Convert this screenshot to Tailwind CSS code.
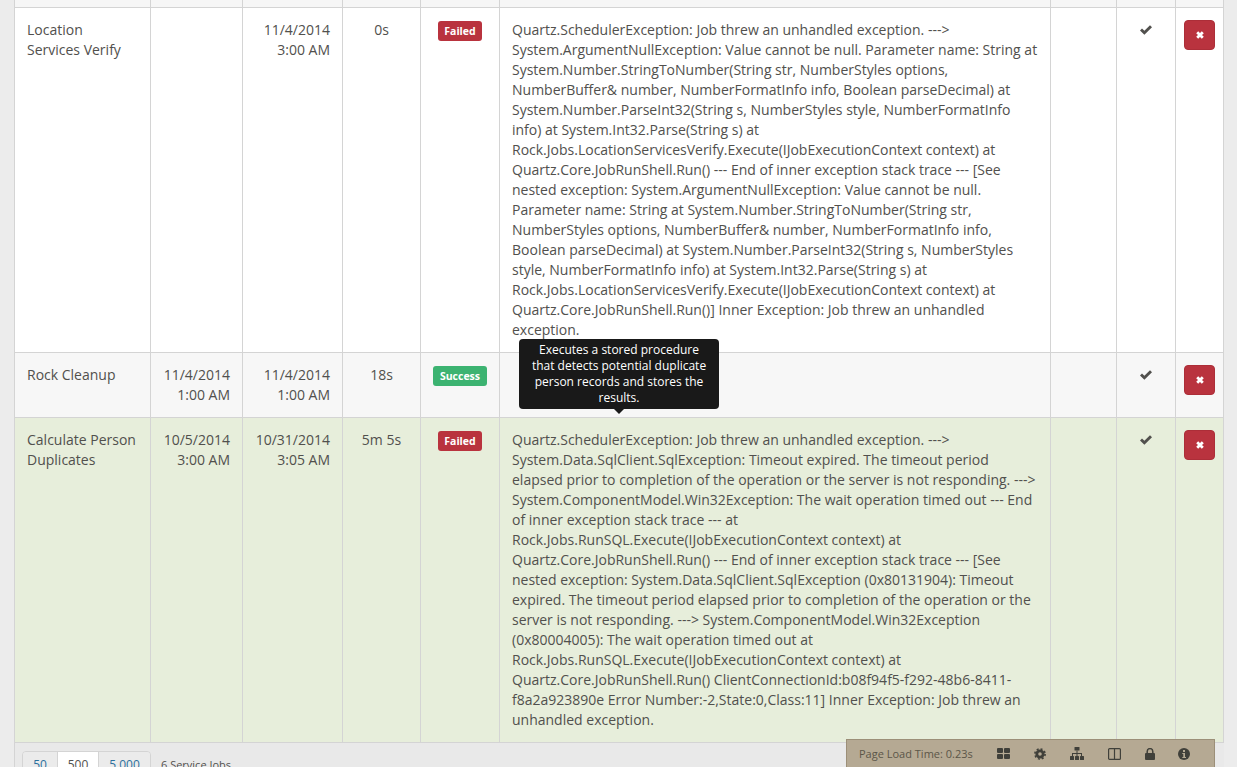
<!DOCTYPE html>
<html lang="en">

<head>
    <meta charset="UTF-8" />
    <title>Service Jobs</title>
    <script src="https://cdn.jsdelivr.net/npm/@tailwindcss/browser@4"></script>
</head>

<body class="bg-[#ececec] h-[767px] overflow-hidden relative font-['Open_Sans',sans-serif] text-[14px] leading-[20px] text-[#51504d]">
    <div class="pl-[14px] pr-[13px]">
        <table class="table-fixed border-collapse w-[1210px] bg-white">
            <colgroup>
                <col class="w-[136px]" />
                <col class="w-[92px]" />
                <col class="w-[100px]" />
                <col class="w-[78px]" />
                <col class="w-[79px]" />
                <col class="w-[551px]" />
                <col class="w-[66px]" />
                <col class="w-[59px]" />
                <col class="w-[48px]" />
            </colgroup>
            <tbody>
                <!-- row cut off by the top of the window -->
                <tr class="h-[7px] bg-[#f6f6f6]">
                    <td class="border-x border-b border-[#d4d4d4] p-0"></td>
                    <td class="border-x border-b border-[#d4d4d4] p-0"></td>
                    <td class="border-x border-b border-[#d4d4d4] p-0"></td>
                    <td class="border-x border-b border-[#d4d4d4] p-0"></td>
                    <td class="border-x border-b border-[#d4d4d4] p-0"></td>
                    <td class="border-x border-b border-[#d4d4d4] p-0"></td>
                    <td class="border-x border-b border-[#d4d4d4] p-0"></td>
                    <td class="border-x border-b border-[#d4d4d4] p-0"></td>
                    <td class="border-x border-b border-[#d4d4d4] p-0"></td>
                </tr>

                <tr class="align-top">
                    <td class="border border-[#d4d4d4] pt-[12px] pb-[12px] px-[12px]">Location Services Verify</td>
                    <td class="border border-[#d4d4d4] px-[12px] pt-[12px] text-right"></td>
                    <td class="border border-[#d4d4d4] px-[12px] pt-[12px] text-right">11/4/2014<br />3:00 AM</td>
                    <td class="border border-[#d4d4d4] px-[12px] pt-[12px] text-center">0s</td>
                    <td class="border border-[#d4d4d4] pt-[13px] text-center">
                        <span class="inline-block bg-[#b9333e] text-white text-[10.5px] leading-[20px] h-[20px] px-[6.5px] rounded-[3px] font-bold align-top">Failed</span>
                    </td>
                    <td class="border border-[#d4d4d4] px-[12px] pt-[12px] pb-[12px] whitespace-nowrap">
                        Quartz.SchedulerException: Job threw an unhandled exception. ---&gt;<br />
                        System.ArgumentNullException: Value cannot be null. Parameter name: String at<br />
                        System.Number.StringToNumber(String str, NumberStyles options,<br />
                        NumberBuffer&amp; number, NumberFormatInfo info, Boolean parseDecimal) at<br />
                        System.Number.ParseInt32(String s, NumberStyles style, NumberFormatInfo<br />
                        info) at System.Int32.Parse(String s) at<br />
                        Rock.Jobs.LocationServicesVerify.Execute(IJobExecutionContext context) at<br />
                        Quartz.Core.JobRunShell.Run() --- End of inner exception stack trace --- [See<br />
                        nested exception: System.ArgumentNullException: Value cannot be null.<br />
                        Parameter name: String at System.Number.StringToNumber(String str,<br />
                        NumberStyles options, NumberBuffer&amp; number, NumberFormatInfo info,<br />
                        Boolean parseDecimal) at System.Number.ParseInt32(String s, NumberStyles<br />
                        style, NumberFormatInfo info) at System.Int32.Parse(String s) at<br />
                        Rock.Jobs.LocationServicesVerify.Execute(IJobExecutionContext context) at<br />
                        Quartz.Core.JobRunShell.Run()] Inner Exception: Job threw an unhandled<br />
                        exception.
                    </td>
                    <td class="border border-[#d4d4d4]"></td>
                    <td class="border border-[#d4d4d4] pt-[17px] text-center">
                        <svg class="inline-block align-top w-[12px] h-[10px]" viewBox="0 0 12 10"><path d="M0 5.4 L2 3.4 L4.4 5.8 L10 0.2 L12 2.2 L4.4 9.8 Z" fill="#51504d" /></svg>
                    </td>
                    <td class="border border-[#d4d4d4] pt-[12px] text-center">
                        <span class="inline-flex items-center justify-center w-[31px] h-[30px] bg-[#b9333e] border border-[#ac2e38] rounded-[4px] align-top">
                            <svg class="w-[8px] h-[8px]" viewBox="0 0 8 8"><path d="M1.2 1.2 L6.8 6.8 M6.8 1.2 L1.2 6.8" stroke="#fff" stroke-width="2.8" /></svg>
                        </span>
                    </td>
                </tr>

                <tr class="align-top bg-[#f7f7f7] h-[65px]">
                    <td class="border border-[#d4d4d4] pt-[12px] px-[12px]">Rock Cleanup</td>
                    <td class="border border-[#d4d4d4] px-[12px] pt-[12px] text-right">11/4/2014<br />1:00 AM</td>
                    <td class="border border-[#d4d4d4] px-[12px] pt-[12px] text-right">11/4/2014<br />1:00 AM</td>
                    <td class="border border-[#d4d4d4] px-[12px] pt-[12px] text-center">18s</td>
                    <td class="border border-[#d4d4d4] pt-[13px] text-center">
                        <span class="inline-block bg-[#3cb371] text-white text-[10.5px] leading-[20px] h-[20px] px-[6.5px] rounded-[3px] font-bold align-top">Success</span>
                    </td>
                    <td class="border border-[#d4d4d4]"></td>
                    <td class="border border-[#d4d4d4]"></td>
                    <td class="border border-[#d4d4d4] pt-[17px] text-center">
                        <svg class="inline-block align-top w-[12px] h-[10px]" viewBox="0 0 12 10"><path d="M0 5.4 L2 3.4 L4.4 5.8 L10 0.2 L12 2.2 L4.4 9.8 Z" fill="#51504d" /></svg>
                    </td>
                    <td class="border border-[#d4d4d4] pt-[12px] text-center">
                        <span class="inline-flex items-center justify-center w-[31px] h-[30px] bg-[#b9333e] border border-[#ac2e38] rounded-[4px] align-top">
                            <svg class="w-[8px] h-[8px]" viewBox="0 0 8 8"><path d="M1.2 1.2 L6.8 6.8 M6.8 1.2 L1.2 6.8" stroke="#fff" stroke-width="2.8" /></svg>
                        </span>
                    </td>
                </tr>

                <tr class="align-top bg-[#e7eedb]">
                    <td class="border border-[#d4d4d4] pt-[12px] px-[12px]">Calculate Person Duplicates</td>
                    <td class="border border-[#d4d4d4] px-[12px] pt-[12px] text-right">10/5/2014<br />3:00 AM</td>
                    <td class="border border-[#d4d4d4] px-[12px] pt-[12px] text-right">10/31/2014<br />3:05 AM</td>
                    <td class="border border-[#d4d4d4] px-[12px] pt-[12px] text-center">5m 5s</td>
                    <td class="border border-[#d4d4d4] pt-[13px] text-center">
                        <span class="inline-block bg-[#b9333e] text-white text-[10.5px] leading-[20px] h-[20px] px-[6.5px] rounded-[3px] font-bold align-top">Failed</span>
                    </td>
                    <td class="border border-[#d4d4d4] px-[12px] pt-[12px] pb-[12px]">
                        Quartz.SchedulerException: Job threw an unhandled exception. ---&gt; System.Data.SqlClient.SqlException: Timeout expired. The timeout period elapsed prior to completion of the operation or the server is not responding. ---&gt; System.ComponentModel.Win32Exception: The wait operation timed out --- End of inner exception stack trace --- at Rock.Jobs.RunSQL.Execute(IJobExecutionContext context) at Quartz.Core.JobRunShell.Run() --- End of inner exception stack trace --- [See nested exception: System.Data.SqlClient.SqlException (0x80131904): Timeout expired. The timeout period elapsed prior to completion of the operation or the server is not responding. ---&gt; System.ComponentModel.Win32Exception (0x80004005): The wait operation timed out at Rock.Jobs.RunSQL.Execute(IJobExecutionContext context) at Quartz.Core.JobRunShell.Run() ClientConnectionId:b08f94f5-f292-48b6-8411-f8a2a923890e Error Number:-2,State:0,Class:11] Inner Exception: Job threw an unhandled exception.
                    </td>
                    <td class="border border-[#d4d4d4]"></td>
                    <td class="border border-[#d4d4d4] pt-[17px] text-center">
                        <svg class="inline-block align-top w-[12px] h-[10px]" viewBox="0 0 12 10"><path d="M0 5.4 L2 3.4 L4.4 5.8 L10 0.2 L12 2.2 L4.4 9.8 Z" fill="#51504d" /></svg>
                    </td>
                    <td class="border border-[#d4d4d4] pt-[12px] text-center">
                        <span class="inline-flex items-center justify-center w-[31px] h-[30px] bg-[#b9333e] border border-[#ac2e38] rounded-[4px] align-top">
                            <svg class="w-[8px] h-[8px]" viewBox="0 0 8 8"><path d="M1.2 1.2 L6.8 6.8 M6.8 1.2 L1.2 6.8" stroke="#fff" stroke-width="2.8" /></svg>
                        </span>
                    </td>
                </tr>
            </tbody>
        </table>

        <!-- grid footer -->
        <div class="flex items-start h-[40px] w-[1210px] bg-[#e9e9e9] border-l border-[#d4d4d4] pl-[7px] pt-[8px]">
            <div class="flex border border-[#d4d4d4] rounded-[4px] h-[40px] overflow-hidden text-[#2a6f9e] text-[12px] leading-[18px]">
                <span class="w-[35px] pt-[4px] text-center bg-[#ebebeb] border-r border-[#d4d4d4]">50</span>
                <span class="w-[41px] pt-[4px] text-center bg-white text-[#51504d] border-r border-[#d4d4d4]">500</span>
                <span class="w-[51px] pt-[4px] text-center bg-[#ebebeb]">5,000</span>
            </div>
            <span class="ml-[10px] pt-[5px] text-[11px] leading-[18px] whitespace-nowrap">6 Service Jobs</span>
        </div>
    </div>

    <!-- tooltip -->
    <div class="absolute left-[519px] top-[339px] w-[200px] h-[70px] bg-[#191919] rounded-[4px] text-white text-[12px] leading-[16px] font-medium text-center px-[8px] pt-[3px]">
        Executes a stored procedure that detects potential duplicate person records and stores the results.
        <div class="absolute left-[95px] top-[70px] w-0 h-0 border-x-[5px] border-x-transparent border-t-[5px] border-t-[#191919]"></div>
    </div>

    <!-- admin bar -->
    <div class="absolute left-[846px] top-[739px] w-[369px] h-[28px] bg-[#b5a993] border-t border-x border-[#9c8f78] flex items-center text-[#5c5648] text-[11px]">
        <span class="ml-[12px] w-[138px] whitespace-nowrap">Page Load Time: 0.23s</span>
        <svg class="w-[13px] h-[11px]" viewBox="0 0 13 11" fill="#40403a"><rect x="0" y="0" width="6" height="5" rx="1" /><rect x="7" y="0" width="6" height="5" rx="1" /><rect x="0" y="6" width="6" height="5" rx="1" /><rect x="7" y="6" width="6" height="5" rx="1" /></svg>
        <svg class="ml-[24px] w-[12px] h-[12px]" viewBox="0 0 12 12"><circle cx="6" cy="6" r="3.2" fill="none" stroke="#40403a" stroke-width="2.8" /><circle cx="6" cy="6" r="5.1" fill="none" stroke="#40403a" stroke-width="1.6" stroke-dasharray="2 2" /></svg>
        <svg class="ml-[24px] w-[14px] h-[13px]" viewBox="0 0 14 13" fill="#40403a"><rect x="4.5" y="0" width="5" height="3.5" rx="0.5" /><rect x="0" y="9" width="4" height="4" rx="0.5" /><rect x="5" y="9" width="4" height="4" rx="0.5" /><rect x="10" y="9" width="4" height="4" rx="0.5" /><path d="M6.5 3.5h1V6h4.5v3h-1V7H7.5v2h-1V7H3v2H2V6h4.5z" /></svg>
        <svg class="ml-[24px] w-[13px] h-[12px]" viewBox="0 0 13 12" fill="none" stroke="#40403a" stroke-width="1.2"><rect x="0.6" y="0.6" width="11.8" height="10.8" rx="1" /><path d="M6.5 1v10" /></svg>
        <svg class="ml-[24px] w-[10px] h-[12px]" viewBox="0 0 10 12" fill="#40403a"><rect x="0" y="5" width="10" height="7" rx="1" /><path d="M2.2 5.5V3.4a2.8 2.8 0 0 1 5.6 0v2.1" fill="none" stroke="#40403a" stroke-width="1.5" /></svg>
        <svg class="ml-[23px] w-[12px] h-[12px]" viewBox="0 0 12 12"><circle cx="6" cy="6" r="6" fill="#40403a" /><rect x="5" y="2" width="2" height="2" fill="#b5a993" /><path d="M4.3 5h2.7v4h1v1H4.3V9h1V6h-1z" fill="#b5a993" /></svg>
    </div>
</body>

</html>
